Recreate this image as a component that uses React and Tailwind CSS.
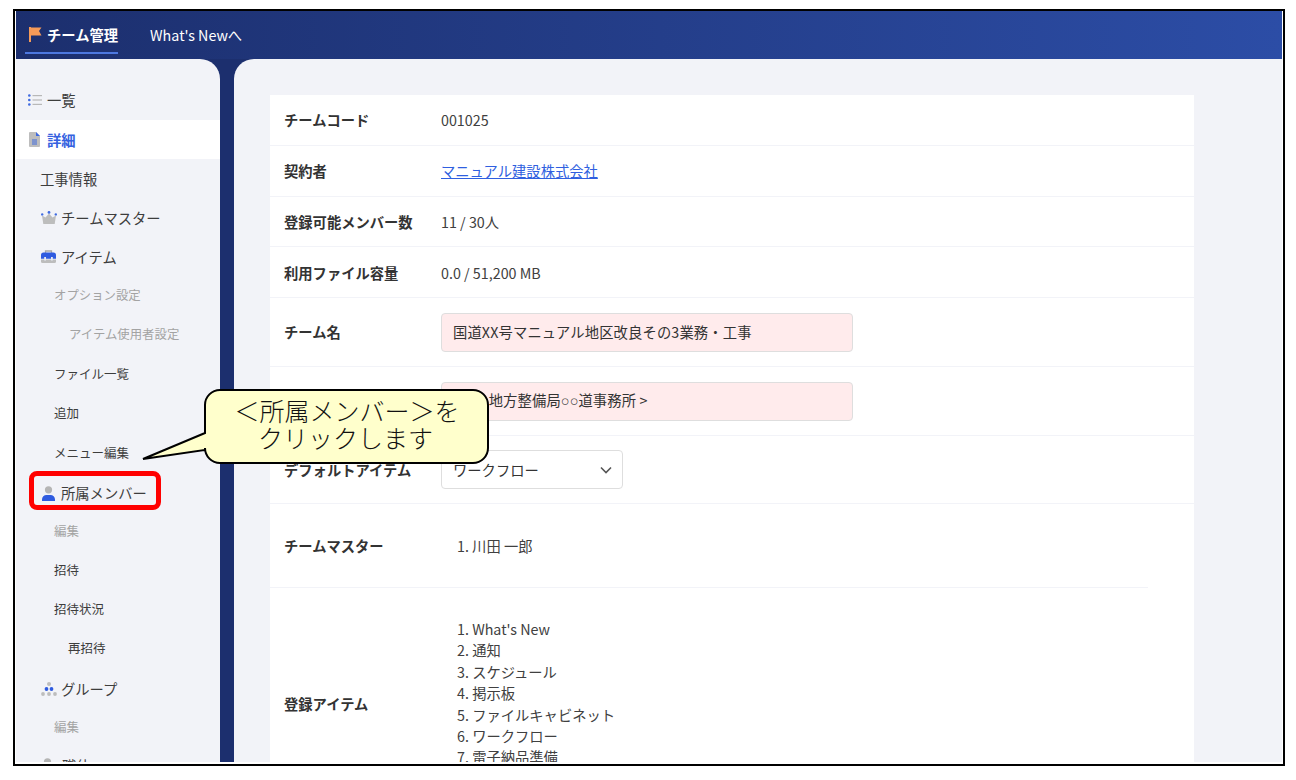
import React from "react";

const font = { fontFamily: '"Noto Sans CJK JP", "Noto Sans", sans-serif' };

const IconFlag = () => (
  <svg width="13" height="15" viewBox="0 0 13 15" className="shrink-0">
    <rect x="0" y="0" width="2" height="15" fill="#f59a58" />
    <path d="M2 .5h10.500L10 4l2.500 4.500H2z" fill="#f59a58" />
  </svg>
);
const IconList = () => (
  <svg width="14" height="12" viewBox="0 0 14 12" className="shrink-0">
    <circle cx="1.300" cy="1.500" r="1.300" fill="#3f6ae0" />
    <circle cx="1.300" cy="6" r="1.300" fill="#3f6ae0" />
    <circle cx="1.300" cy="10.500" r="1.300" fill="#3f6ae0" />
    <rect x="4.500" y="1" width="9.500" height="1.200" fill="#b8b8b8" />
    <rect x="4.500" y="5.400" width="9.500" height="1.200" fill="#b8b8b8" />
    <rect x="4.500" y="9.800" width="9.500" height="1.200" fill="#b8b8b8" />
  </svg>
);
const IconDoc = () => (
  <svg width="11" height="15" viewBox="0 0 11 15" className="shrink-0">
    <path d="M1 0h6l4 4v10a1 1 0 0 1-1 1H1a1 1 0 0 1-1-1V1a1 1 0 0 1 1-1z" fill="#bdbdbd" />
    <path d="M7 0l4 4H7z" fill="#3f6ae0" />
    <rect x="3" y="7.500" width="5" height="1" fill="#3f6ae0" />
    <rect x="3" y="9.500" width="5" height="1" fill="#3f6ae0" />
    <rect x="3" y="11.500" width="5" height="1" fill="#3f6ae0" />
  </svg>
);
const IconCrown = () => (
  <svg width="16" height="13" viewBox="0 0 16 13" className="shrink-0">
    <path d="M1 4.500l3.500 2L8 2.500l3.500 4 3.500-2-1.300 8.500H2.300z" fill="#bdbdbd" />
    <circle cx="8" cy="1.400" r="1.400" fill="#3f6ae0" />
    <circle cx="1.200" cy="3.400" r="1.200" fill="#3f6ae0" />
    <circle cx="14.800" cy="3.400" r="1.200" fill="#3f6ae0" />
  </svg>
);
const IconBox = () => (
  <svg width="15" height="13" viewBox="0 0 15 13" className="shrink-0">
    <path d="M4.500 3V1h6v2" fill="none" stroke="#a8a8a8" strokeWidth="1.300" />
    <path d="M2.500 2.500h10A2.500 2.500 0 0 1 15 5v3.800H0V5a2.500 2.500 0 0 1 2.500-2.500z" fill="#2f5be0" />
    <path d="M0 9.500h15v2a1.500 1.500 0 0 1-1.500 1.500h-12A1.500 1.500 0 0 1 0 11.500z" fill="#bdbdbd" />
    <rect x="3.200" y="7" width="1.800" height="3.500" fill="#e8eaf3" />
    <rect x="10" y="7" width="1.800" height="3.500" fill="#e8eaf3" />
  </svg>
);
const IconUser = () => (
  <svg width="13" height="15" viewBox="0 0 13 15" className="shrink-0">
    <circle cx="6.500" cy="3.800" r="3.600" fill="#b5b5b5" />
    <path d="M0 15v-1.500A4.500 4.500 0 0 1 4.500 9h4a4.500 4.500 0 0 1 4.500 4.500V15z" fill="#2f5be0" />
  </svg>
);
const IconGroup = () => (
  <svg width="16" height="14" viewBox="0 0 16 14" className="shrink-0">
    <circle cx="8" cy="2" r="2" fill="#bdbdbd" />
    <circle cx="5.500" cy="7" r="1.900" fill="#2f5be0" />
    <circle cx="10.500" cy="7" r="1.900" fill="#2f5be0" />
    <circle cx="2" cy="12" r="1.900" fill="#bdbdbd" />
    <circle cx="8" cy="12" r="1.900" fill="#bdbdbd" />
    <circle cx="14" cy="12" r="1.900" fill="#bdbdbd" />
  </svg>
);

function Side({ h = "h-[39px]", cls = "", icon, children }) {
  return (
    <div className={`flex items-center shrink-0 ${h} ${cls}`}>
      {icon && <span className="flex w-[21px] shrink-0 items-center">{icon}</span>}
      {children}
    </div>
  );
}

function Row({ label, h, children, cls = "" }) {
  return (
    <div className={`flex items-center border-b border-[#f2f3f8] px-[14px] shrink-0 ${h} ${cls}`}>
      <div className="w-[157px] shrink-0 text-[14.3px] font-bold text-[#333333]">{label}</div>
      <div className="text-[14.3px] text-[#404040]">{children}</div>
    </div>
  );
}

const Pink = ({ children }) => (
  <div className="flex h-[39px] w-[412px] items-center rounded-[4px] border border-[#dedede] bg-[#ffebec] px-[11px] text-[14.3px] tracking-[0.14px] text-[#333333]">
    <span>{children}</span>
  </div>
);

const Rings = () => <span className="font-['Liberation_Sans']">○○</span>;

export default function App() {
  const items = ["What's New", "通知", "スケジュール", "掲示板", "ファイルキャビネット", "ワークフロー", "電子納品準備"];
  return (
    <div className="relative h-[780px] w-[1296px] overflow-hidden bg-white" style={font}>
      <div className="absolute left-[13px] top-[9px] flex h-[757px] w-[1272px] flex-col overflow-hidden border-2 border-black bg-white pb-[2px] pl-[1px] pr-[1px]">
        <header className="flex h-[48px] shrink-0 items-center bg-gradient-to-r from-[#1c2f6e] to-[#2c4da6] text-[14.3px] text-white">
          <div className="ml-[9px] flex h-[37px] items-center gap-[5px] border-b-2 border-[#4d78e0] pl-[4px] pt-[1px] font-bold">
            <IconFlag />
            チーム管理
          </div>
          <div className="ml-[32px] pb-[1px]">What's Newへ</div>
        </header>
        <div className="flex min-h-0 flex-1 bg-[#1c2f6e]">
          <aside className="flex w-[204px] shrink-0 flex-col overflow-hidden rounded-tr-[20px] bg-[#f2f3f8] pt-[22px] text-[14.3px] text-[#3d3d3d]">
            <Side cls="pl-[12px] pb-[1px]" icon={<IconList />}><span className="-ml-[2px]">一覧</span></Side>
            <Side cls="bg-white pl-[13px] font-bold text-[#3562e0]" icon={<IconDoc />}><span className="-ml-[3px]">詳細</span></Side>
            <Side cls="pl-[24px]">工事情報</Side>
            <Side cls="pl-[25px]" icon={<IconCrown />}><span className="-ml-[1px]">チームマスター</span></Side>
            <Side cls="pl-[25px]" icon={<IconBox />}><span className="-ml-[1px]">アイテム</span></Side>
            <Side h="h-[38px]" cls="pl-[38px] text-[12.4px] text-[#a3a3a3]">オプション設定</Side>
            <Side h="h-[41px]" cls="pl-[53px] text-[12.4px] text-[#a3a3a3]">アイテム使用者設定</Side>
            <Side cls="pl-[38px] text-[12.5px]">ファイル一覧</Side>
            <Side h="h-[39px]" cls="pl-[38px] text-[12.5px]">追加</Side>
            <Side h="h-[40px]" cls="pl-[38px] text-[12.5px]">メニュー編集</Side>
            <Side cls="pl-[26px] pt-[1px]" icon={<IconUser />}><span className="-ml-[2px]">所属メンバー</span></Side>
            <Side cls="pl-[38px] text-[12.5px] text-[#a3a3a3]">編集</Side>
            <Side cls="pl-[38px] text-[12.5px]">招待</Side>
            <Side cls="pl-[38px] text-[12.5px]">招待状況</Side>
            <Side cls="pl-[52px] text-[12.5px]">再招待</Side>
            <Side h="h-[40px]" cls="pl-[25px] pt-[2px]" icon={<IconGroup />}><span className="-ml-[1px]">グループ</span></Side>
            <Side h="h-[38px]" cls="pl-[38px] text-[12.5px] text-[#a3a3a3]">編集</Side>
            <Side cls="pl-[25px]" icon={<IconUser />}>職位</Side>
          </aside>
          <div className="w-[14px] shrink-0" />
          <main className="min-w-0 flex-1 overflow-hidden rounded-tl-[20px] bg-[#f2f3f8] pl-[36px] pt-[36px]">
            <div className="flex w-[924px] flex-col bg-white">
              <Row label="チームコード" h="h-[51px] pb-[1px]">001025</Row>
              <Row label="契約者" h="h-[51px] pb-[1px]"><span className="text-[#2f5fe0] underline">マニュアル建設株式会社</span></Row>
              <Row label="登録可能メンバー数" h="h-[50px]">11 / 30人</Row>
              <Row label="利用ファイル容量" h="h-[51px] pt-[1px]">0.0 / 51,200 MB</Row>
              <Row label="チーム名" h="h-[69px]"><Pink>国道XX号マニュアル地区改良その3業務・工事</Pink></Row>
              <Row label="発注者" h="h-[69px]"><Pink>&lt;&nbsp;&nbsp;<Rings /> 地方整備局<Rings />道事務所 &gt;</Pink></Row>
              <Row label="デフォルトアイテム" h="h-[68px]">
                <div className="flex h-[39px] w-[182px] items-center justify-between rounded-[4px] border border-[#dedede] bg-white pl-[11px] pr-[10px] text-[#333333]">
                  ワークフロー
                  <svg width="12" height="8" viewBox="0 0 12 8" fill="none" stroke="#555" strokeWidth="1.600"><path d="M1 1.500l5 5 5-5" /></svg>
                </div>
              </Row>
              <div className="mr-[46px] flex h-[84px] shrink-0 items-center border-b border-[#f2f3f8] pl-[14px]">
                <div className="w-[173px] shrink-0 text-[14.3px] font-bold text-[#333333]">チームマスター</div>
                <div className="text-[14.3px] text-[#404040]">1. 川田 一郎</div>
              </div>
              <div className="flex items-center pb-[31px] pl-[14px] pt-[30px]">
                <div className="w-[173px] shrink-0 text-[14.3px] font-bold text-[#333333]">登録アイテム</div>
                <div className="text-[14.3px] leading-[21.4px] text-[#404040]">
                  {items.map((t, i) => <div key={t}>{i + 1}. {t}</div>)}
                  <div>8. 写真管理</div>
                </div>
              </div>
            </div>
          </main>
        </div>
      </div>

      <div className="absolute left-[29px] top-[471px] h-[39px] w-[132px] rounded-[8px] border-[5px] border-[#ff0000]" />

      <svg className="absolute left-[140px] top-[388px]" width="352" height="78" viewBox="0 0 352 78">
        <path d="M80 2H333a15 15 0 0 1 15 15V60a15 15 0 0 1-15 15H80a15 15 0 0 1-15-15V62L3 71 65 45V17a15 15 0 0 1 15-15z" fill="#ffffcc" stroke="#000" strokeWidth="2" />
      </svg>
      <div className="absolute left-[205px] top-[390px] flex h-[68px] w-[284px] flex-col items-center justify-center text-[25px] font-light leading-[27px] text-[#111]">
        <div>＜所属メンバー＞を</div>
        <div className="-ml-[3px]">クリックします</div>
      </div>
    </div>
  );
}
